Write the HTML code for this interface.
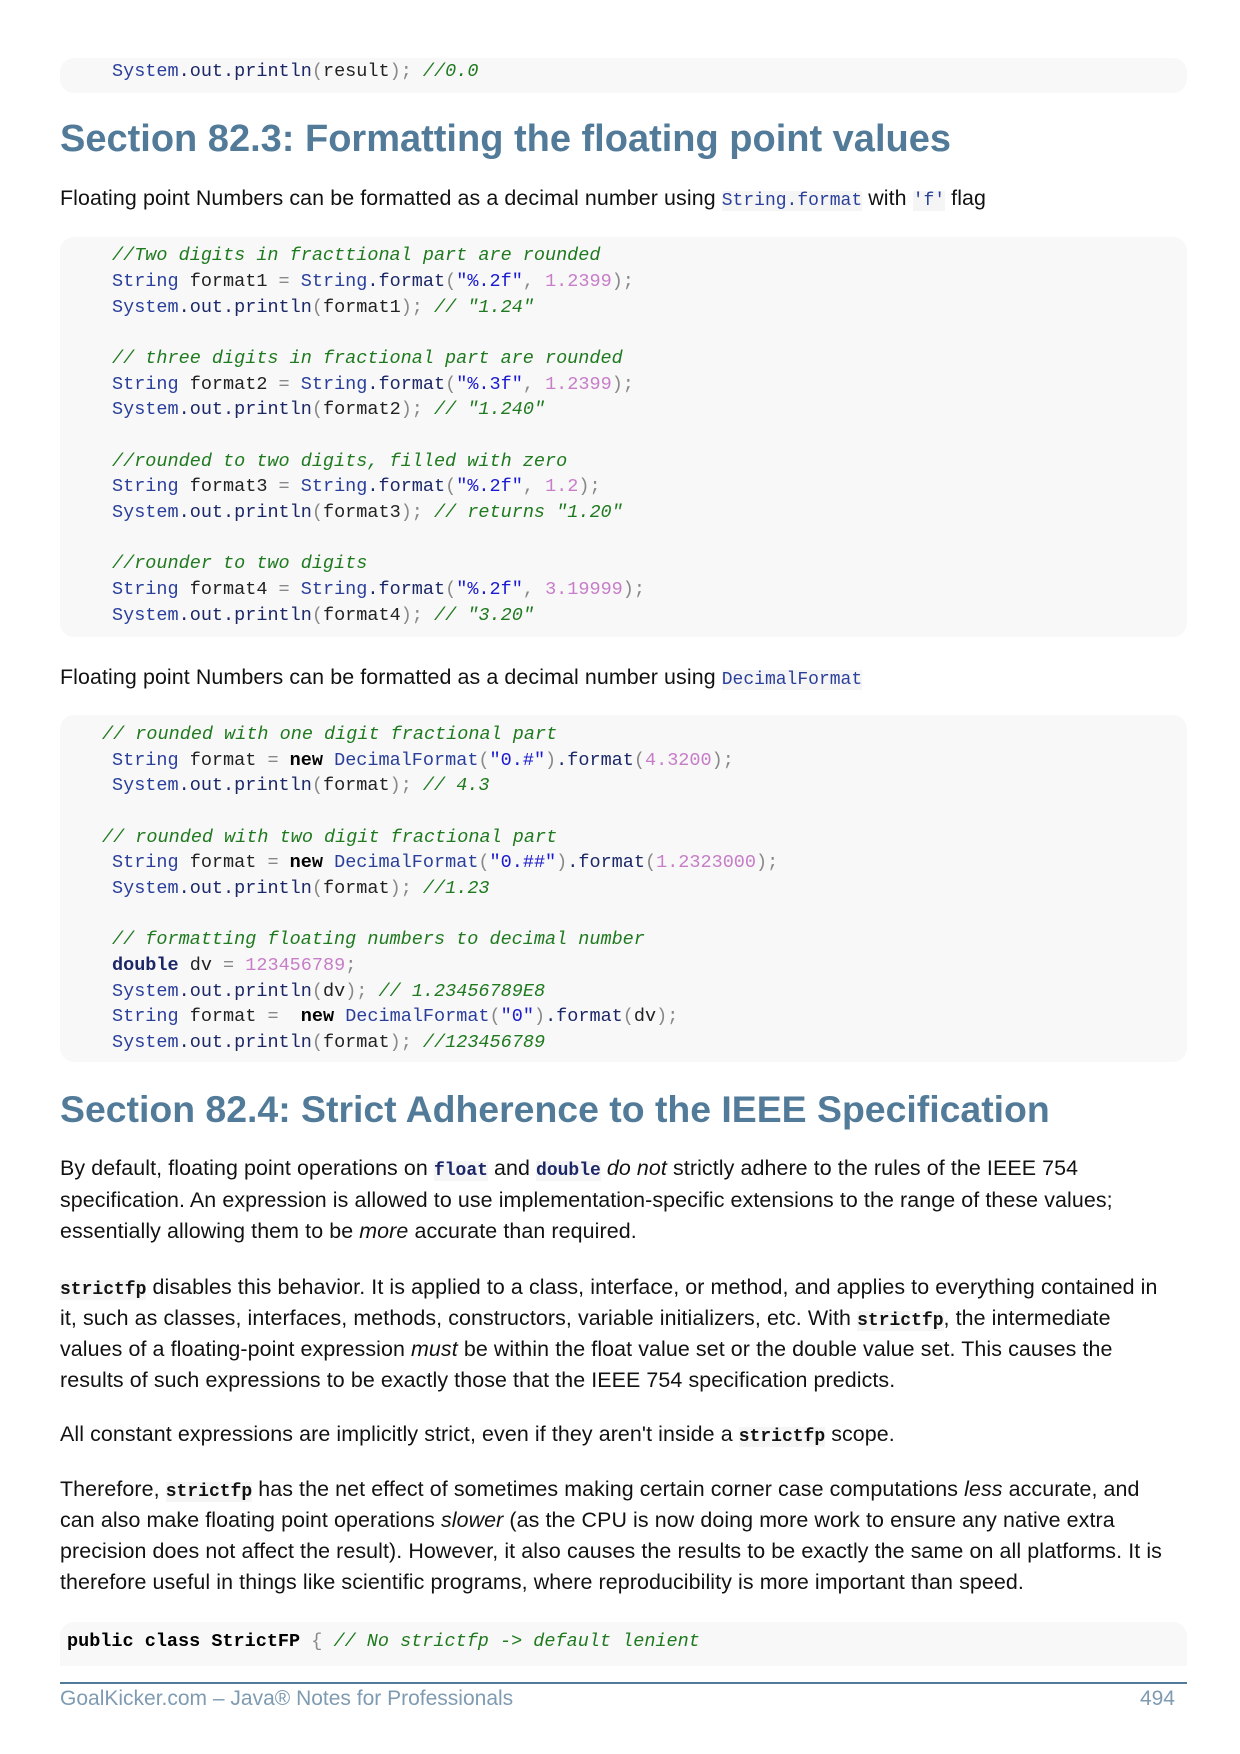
<!DOCTYPE html>
<html><head><meta charset="utf-8"><style>
body{margin:0;width:1240px;height:1754px;background:#fff;position:relative;font-family:"Liberation Sans",sans-serif;overflow:hidden}
.cb{position:absolute;left:60px;width:1127px;background:#f8f8f8;border-radius:14px}
.cl{position:absolute;left:112px;font-family:"Liberation Mono",monospace;font-size:18.5px;line-height:26px;height:26px;white-space:pre;color:#222}
.i{left:102px}
.t{color:#2a3f9a}.o{color:#1b2766}.p{color:#888}.c{color:#1f7a1f;font-style:italic}.n{color:#c77dc8}.s{color:#1a1ad0}.kw{font-weight:bold;color:#000}.kn{font-weight:bold;color:#1b2766}
.h{position:absolute;left:60px;font-size:38px;font-weight:bold;color:#527b99;white-space:nowrap;line-height:44px}
.b{position:absolute;left:60px;font-size:21.4px;line-height:30px;color:#111;white-space:nowrap;letter-spacing:0.1px}
.b code{font-family:"Liberation Mono",monospace;font-size:18px;background:#f5f5f5;color:#2a3f9a;letter-spacing:0}
.b code.bd{font-weight:bold;color:#1b2766}
.b code.bk{font-weight:bold;color:#111}
</style></head><body>
<div class="cb" style="top:58px;height:35px"></div>
<div class="cl" style="top:59px"><span class="t">System</span><span class="o">.out.println</span><span class="p">(</span>result<span class="p">);</span> <span class="c">//0.0</span></div>

<div class="h" style="top:117px">Section 82.3: Formatting the floating point values</div>
<div class="b" style="top:183px">Floating point Numbers can be formatted as a decimal number using <code>String.format</code> with <code>'f'</code> flag</div>

<div class="cb" style="top:237px;height:400px"></div>
<div class="cl" style="top:243px"><span class="c">//Two digits in fracttional part are rounded</span></div>
<div class="cl" style="top:269px"><span class="t">String</span> format1 <span class="p">=</span> <span class="t">String</span><span class="o">.format</span><span class="p">(</span><span class="s">"%.2f"</span><span class="p">,</span> <span class="n">1.2399</span><span class="p">);</span></div>
<div class="cl" style="top:295px"><span class="t">System</span><span class="o">.out.println</span><span class="p">(</span>format1<span class="p">);</span> <span class="c">// "1.24"</span></div>
<div class="cl" style="top:346px"><span class="c">// three digits in fractional part are rounded</span></div>
<div class="cl" style="top:372px"><span class="t">String</span> format2 <span class="p">=</span> <span class="t">String</span><span class="o">.format</span><span class="p">(</span><span class="s">"%.3f"</span><span class="p">,</span> <span class="n">1.2399</span><span class="p">);</span></div>
<div class="cl" style="top:397px"><span class="t">System</span><span class="o">.out.println</span><span class="p">(</span>format2<span class="p">);</span> <span class="c">// "1.240"</span></div>
<div class="cl" style="top:449px"><span class="c">//rounded to two digits, filled with zero</span></div>
<div class="cl" style="top:474px"><span class="t">String</span> format3 <span class="p">=</span> <span class="t">String</span><span class="o">.format</span><span class="p">(</span><span class="s">"%.2f"</span><span class="p">,</span> <span class="n">1.2</span><span class="p">);</span></div>
<div class="cl" style="top:500px"><span class="t">System</span><span class="o">.out.println</span><span class="p">(</span>format3<span class="p">);</span> <span class="c">// returns "1.20"</span></div>
<div class="cl" style="top:551px"><span class="c">//rounder to two digits</span></div>
<div class="cl" style="top:577px"><span class="t">String</span> format4 <span class="p">=</span> <span class="t">String</span><span class="o">.format</span><span class="p">(</span><span class="s">"%.2f"</span><span class="p">,</span> <span class="n">3.19999</span><span class="p">);</span></div>
<div class="cl" style="top:603px"><span class="t">System</span><span class="o">.out.println</span><span class="p">(</span>format4<span class="p">);</span> <span class="c">// "3.20"</span></div>

<div class="b" style="top:662px">Floating point Numbers can be formatted as a decimal number using <code>DecimalFormat</code></div>

<div class="cb" style="top:715px;height:347px"></div>
<div class="cl i" style="top:722px"><span class="c">// rounded with one digit fractional part</span></div>
<div class="cl" style="top:748px"><span class="t">String</span> format <span class="p">=</span> <span class="kw">new</span> <span class="t">DecimalFormat</span><span class="p">(</span><span class="s">"0.#"</span><span class="p">)</span><span class="o">.format</span><span class="p">(</span><span class="n">4.3200</span><span class="p">);</span></div>
<div class="cl" style="top:773px"><span class="t">System</span><span class="o">.out.println</span><span class="p">(</span>format<span class="p">);</span> <span class="c">// 4.3</span></div>
<div class="cl i" style="top:825px"><span class="c">// rounded with two digit fractional part</span></div>
<div class="cl" style="top:850px"><span class="t">String</span> format <span class="p">=</span> <span class="kw">new</span> <span class="t">DecimalFormat</span><span class="p">(</span><span class="s">"0.##"</span><span class="p">)</span><span class="o">.format</span><span class="p">(</span><span class="n">1.2323000</span><span class="p">);</span></div>
<div class="cl" style="top:876px"><span class="t">System</span><span class="o">.out.println</span><span class="p">(</span>format<span class="p">);</span> <span class="c">//1.23</span></div>
<div class="cl" style="top:927px"><span class="c">// formatting floating numbers to decimal number</span></div>
<div class="cl" style="top:953px"><span class="kn">double</span> dv <span class="p">=</span> <span class="n">123456789</span><span class="p">;</span></div>
<div class="cl" style="top:979px"><span class="t">System</span><span class="o">.out.println</span><span class="p">(</span>dv<span class="p">);</span> <span class="c">// 1.23456789E8</span></div>
<div class="cl" style="top:1004px"><span class="t">String</span> format <span class="p">=</span>  <span class="kw">new</span> <span class="t">DecimalFormat</span><span class="p">(</span><span class="s">"0"</span><span class="p">)</span><span class="o">.format</span><span class="p">(</span>dv<span class="p">);</span></div>
<div class="cl" style="top:1030px"><span class="t">System</span><span class="o">.out.println</span><span class="p">(</span>format<span class="p">);</span> <span class="c">//123456789</span></div>

<div class="h" style="top:1087px;font-size:37.4px">Section 82.4: Strict Adherence to the IEEE Specification</div>

<div class="b" style="top:1153px">By default, floating point operations on <code class="bd">float</code> and <code class="bd">double</code> <i>do not</i> strictly adhere to the rules of the IEEE 754</div>
<div class="b" style="top:1185px">specification. An expression is allowed to use implementation-specific extensions to the range of these values;</div>
<div class="b" style="top:1216px">essentially allowing them to be <i>more</i> accurate than required.</div>

<div class="b" style="top:1272px"><code class="bk">strictfp</code> disables this behavior. It is applied to a class, interface, or method, and applies to everything contained in</div>
<div class="b" style="top:1303px">it, such as classes, interfaces, methods, constructors, variable initializers, etc. With <code class="bk">strictfp</code>, the intermediate</div>
<div class="b" style="top:1334px">values of a floating-point expression <i>must</i> be within the float value set or the double value set. This causes the</div>
<div class="b" style="top:1365px">results of such expressions to be exactly those that the IEEE 754 specification predicts.</div>

<div class="b" style="top:1419px">All constant expressions are implicitly strict, even if they aren't inside a <code class="bk">strictfp</code> scope.</div>

<div class="b" style="top:1474px">Therefore, <code class="bk">strictfp</code> has the net effect of sometimes making certain corner case computations <i>less</i> accurate, and</div>
<div class="b" style="top:1505px">can also make floating point operations <i>slower</i> (as the CPU is now doing more work to ensure any native extra</div>
<div class="b" style="top:1536px">precision does not affect the result). However, it also causes the results to be exactly the same on all platforms. It is</div>
<div class="b" style="top:1567px">therefore useful in things like scientific programs, where reproducibility is more important than speed.</div>

<div class="cb" style="top:1622px;height:44px;border-radius:14px 14px 0 0"></div>
<div class="cl" style="top:1629px;left:67px"><span class="kw">public class StrictFP</span> <span class="p">{</span> <span class="c">// No strictfp -&gt; default lenient</span></div>

<div style="position:absolute;left:60px;top:1682px;width:1127px;height:2px;background:#527b99"></div>
<div style="position:absolute;left:60px;top:1687px;font-size:21px;color:#7f9bb2;line-height:24px">GoalKicker.com – Java® Notes for Professionals</div>
<div style="position:absolute;right:65px;top:1687px;font-size:21px;color:#7f9bb2;line-height:24px">494</div>
</body></html>
